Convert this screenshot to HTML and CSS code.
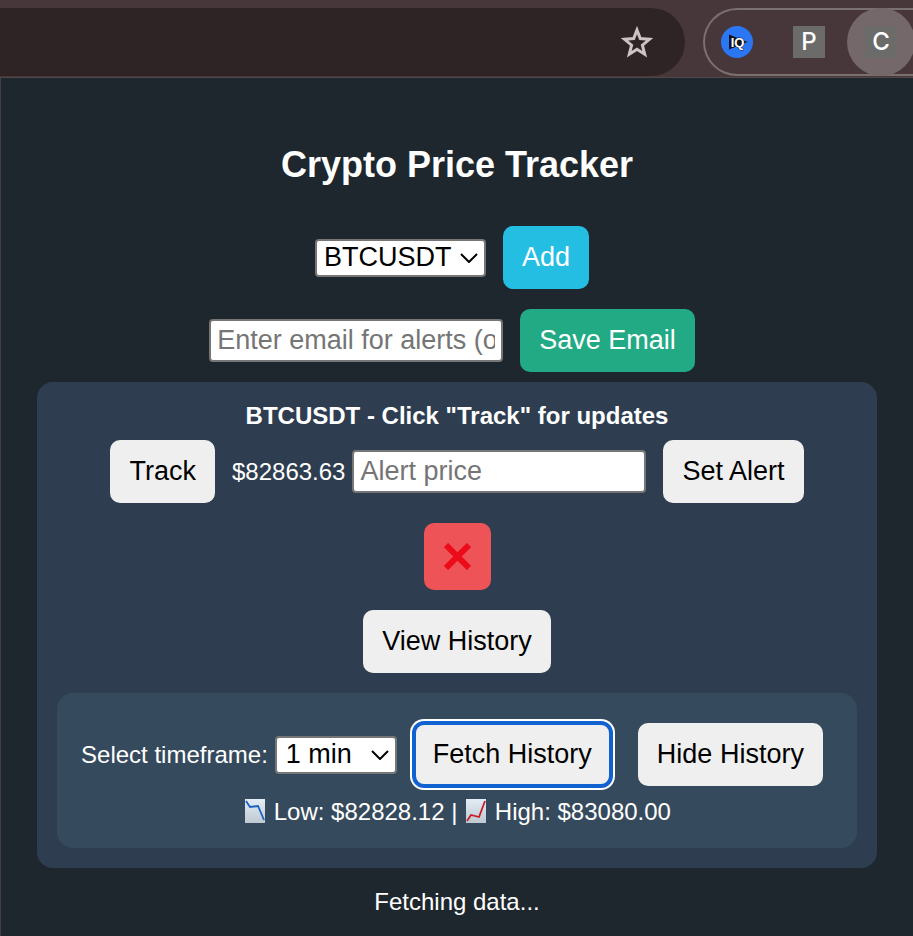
FILE: index.html
```html
<!DOCTYPE html>
<html lang="en">
<head>
<meta charset="utf-8">
<meta name="viewport" content="width=device-width, initial-scale=1">
<title>Crypto Price Tracker</title>
<link rel="stylesheet" href="styles.css">
</head>
<body>
<header class="toolbar">
  <div class="address-bar">
    <button class="bare" aria-label="Bookmark">
      <svg class="star" viewBox="0 0 32 32" aria-hidden="true"><path d="M16 4l3.300 8.600 9.200.7-7.100 5.900 2.300 9-7.700-4.900-7.700 4.900 2.300-9-7.100-5.900 9.200-.7z"/></svg>
    </button>
  </div>
  <nav class="extensions" aria-label="Extensions">
    <button class="bare" aria-label="IQ">
      <svg class="iq" viewBox="0 0 32 32" aria-hidden="true"><circle cx="16" cy="16" r="16" fill="#2b76f2"/><path d="M8 8.500L26.500 16 8 23.500z" fill="#10131c"/><text x="16.500" y="20.500" text-anchor="middle">IQ</text></svg>
    </button>
    <button class="bare tile">P</button>
    <button class="bare active"><span class="tile">C</span></button>
  </nav>
</header>
<main class="popup">
  <h1>Crypto Price Tracker</h1>
  <div class="row">
    <span class="select">
      <select aria-label="Coin"><option>BTCUSDT</option></select>
      <svg class="chevron" viewBox="0 0 18 10" aria-hidden="true"><path d="M1 1l8 8 8-8"/></svg>
    </span>
    <button class="btn add">Add</button>
  </div>
  <div class="row">
    <input class="field" type="email" aria-label="Email" placeholder="Enter email for alerts (optional)">
    <button class="btn save">Save Email</button>
  </div>
  <section class="card">
    <h2>BTCUSDT - Click "Track" for updates</h2>
    <div class="row">
      <button class="btn">Track</button>
      <span>$82863.63</span>
      <input class="field" type="text" aria-label="Alert price" placeholder="Alert price">
      <button class="btn">Set Alert</button>
    </div>
    <div class="row">
      <button class="btn remove" aria-label="Remove"><svg viewBox="0 0 27 27" aria-hidden="true"><path d="M2 2l23 23M25 2L2 25"/></svg></button>
    </div>
    <div class="row">
      <button class="btn">View History</button>
    </div>
    <div class="history">
      <div class="row">
        <label for="timeframe">Select timeframe:</label>
        <span class="select timeframe">
          <select id="timeframe"><option>1 min</option></select>
          <svg class="chevron" viewBox="0 0 18 10" aria-hidden="true"><path d="M1 1l8 8 8-8"/></svg>
        </span>
        <button class="btn focused">Fetch History</button>
        <button class="btn">Hide History</button>
      </div>
      <p class="range">
        <svg class="chart" viewBox="0 0 20 24" aria-hidden="true"><defs><linearGradient id="paper" x1="0" y1="0" x2="0" y2="1"><stop offset="0" stop-color="#e3edf6"/><stop offset="1" stop-color="#bfc9d1"/></linearGradient></defs><path d="M0 0h20v24H0z" fill="url(#paper)"/><path d="M1 2l4 6 8-1 6 14" fill="none" stroke="#1b62c5" stroke-width="1.800"/></svg>
        Low: $82828.12 |
        <svg class="chart" viewBox="0 0 20 24" aria-hidden="true"><path d="M0 0h20v24H0z" fill="url(#paper)"/><path d="M1 22l4-6 8 2 6-16" fill="none" stroke="#c81e2b" stroke-width="1.800"/></svg>
        High: $83080.00
      </p>
    </div>
  </section>
  <p class="status">Fetching data...</p>
</main>
</body>
</html>
```
FILE: styles.css
```css
* { box-sizing: border-box; }

body {
  margin: 0;
  background: #1f272e;
  color: #fff;
  font: 24px/28px "Liberation Sans", Arial, sans-serif;
  overflow-x: hidden;
}

.toolbar {
  display: flex;
  gap: 18px;
  padding: 8px 0 1px;
  background: #47373a;
  border-bottom: 1px solid #514648;
  overflow: hidden;
}

.address-bar {
  flex: 1;
  height: 68px;
  display: flex;
  align-items: center;
  justify-content: flex-end;
  padding-right: 32px;
  background: #2f2425;
  border-radius: 0 34px 34px 0;
}

.bare {
  flex: none;
  display: flex;
  align-items: center;
  justify-content: center;
  padding: 0;
  border: 0;
  background: none;
  color: #fff;
}

.star { width: 32px; height: 32px; fill: none; stroke: #cdc2c4; stroke-width: 3; }

.extensions {
  flex: none;
  width: 210px;
  height: 68px;
  display: flex;
  align-items: center;
  gap: 40px;
  padding-left: 16px;
  border: 2px solid #7b7070;
  border-right: 0;
  border-radius: 34px 0 0 34px;
}

.iq { width: 32px; height: 32px; }
.iq text {
  font: bold 13px "Liberation Sans", sans-serif;
  fill: #fff;
  stroke: #10131c;
  stroke-width: 1;
  paint-order: stroke;
}

.tile {
  width: 32px;
  height: 32px;
  background: #6b6b6a;
  font: 500 24px/32px Inter, sans-serif;
  text-align: center;
}

.active {
  width: 68px;
  height: 68px;
  margin-left: -18px;
  border-radius: 50%;
  background: #75686a;
}

.popup {
  padding: 66px 36px 20px;
  border-left: 1px solid #453f43;
  text-align: center;
}

h1 { margin: 0 0 30px; font-size: 36px; line-height: 42px; }
h2 { margin: 0; font-size: 24px; line-height: 28px; }

.row {
  display: flex;
  align-items: center;
  justify-content: center;
  gap: 7px;
}

.btn {
  flex: none;
  margin: 10px;
  padding: 16px 19px;
  border: 0;
  border-radius: 10px;
  background: #efefef;
  color: #000;
  font: 27px/31px "Liberation Sans", Arial, sans-serif;
}

.add { background: #25bee3; color: #fff; }
.save { background: #22aa85; color: #fff; }
.remove { padding: 20px; background: #ee5457; }
.remove svg { display: block; width: 27px; height: 27px; stroke: #ec0b19; stroke-width: 6; }
.focused { outline: 4px solid #1062d1; outline-offset: -2px; box-shadow: 0 0 0 4px #fff; }

.field {
  flex: none;
  width: 294px;
  height: 43px;
  padding: 2px 6px;
  border: 2px solid #767676;
  border-radius: 4px;
  background: #fff;
  color: #000;
  font: 27px/31px "Liberation Sans", Arial, sans-serif;
}

.field::placeholder { color: #757575; opacity: 1; }

.select { position: relative; flex: none; }

.select select {
  display: block;
  width: 171px;
  height: 38px;
  padding: 0 7px;
  border: 2px solid #767676;
  border-radius: 4px;
  background: #fff;
  color: #000;
  font: 27px/31px "Liberation Sans", Arial, sans-serif;
  appearance: none;
}

.timeframe select { width: 122px; padding: 0 9px; }

.chevron {
  position: absolute;
  right: 8px;
  top: 14px;
  width: 18px;
  height: 10px;
  fill: none;
  stroke: #000;
  stroke-width: 2;
  pointer-events: none;
}

.card {
  padding: 20px;
  border-radius: 16px;
  background: #2e3e50;
}

.history {
  margin-top: 10px;
  padding: 20px;
  border-radius: 16px;
  background: #364a5d;
}

.history .row { margin: 0 -20px; }

.range { margin: 0; line-height: 32px; }
.chart { width: 20px; height: 24px; margin: 0 2px; vertical-align: -3px; }

.status { margin: 20px 0 0; }
```
